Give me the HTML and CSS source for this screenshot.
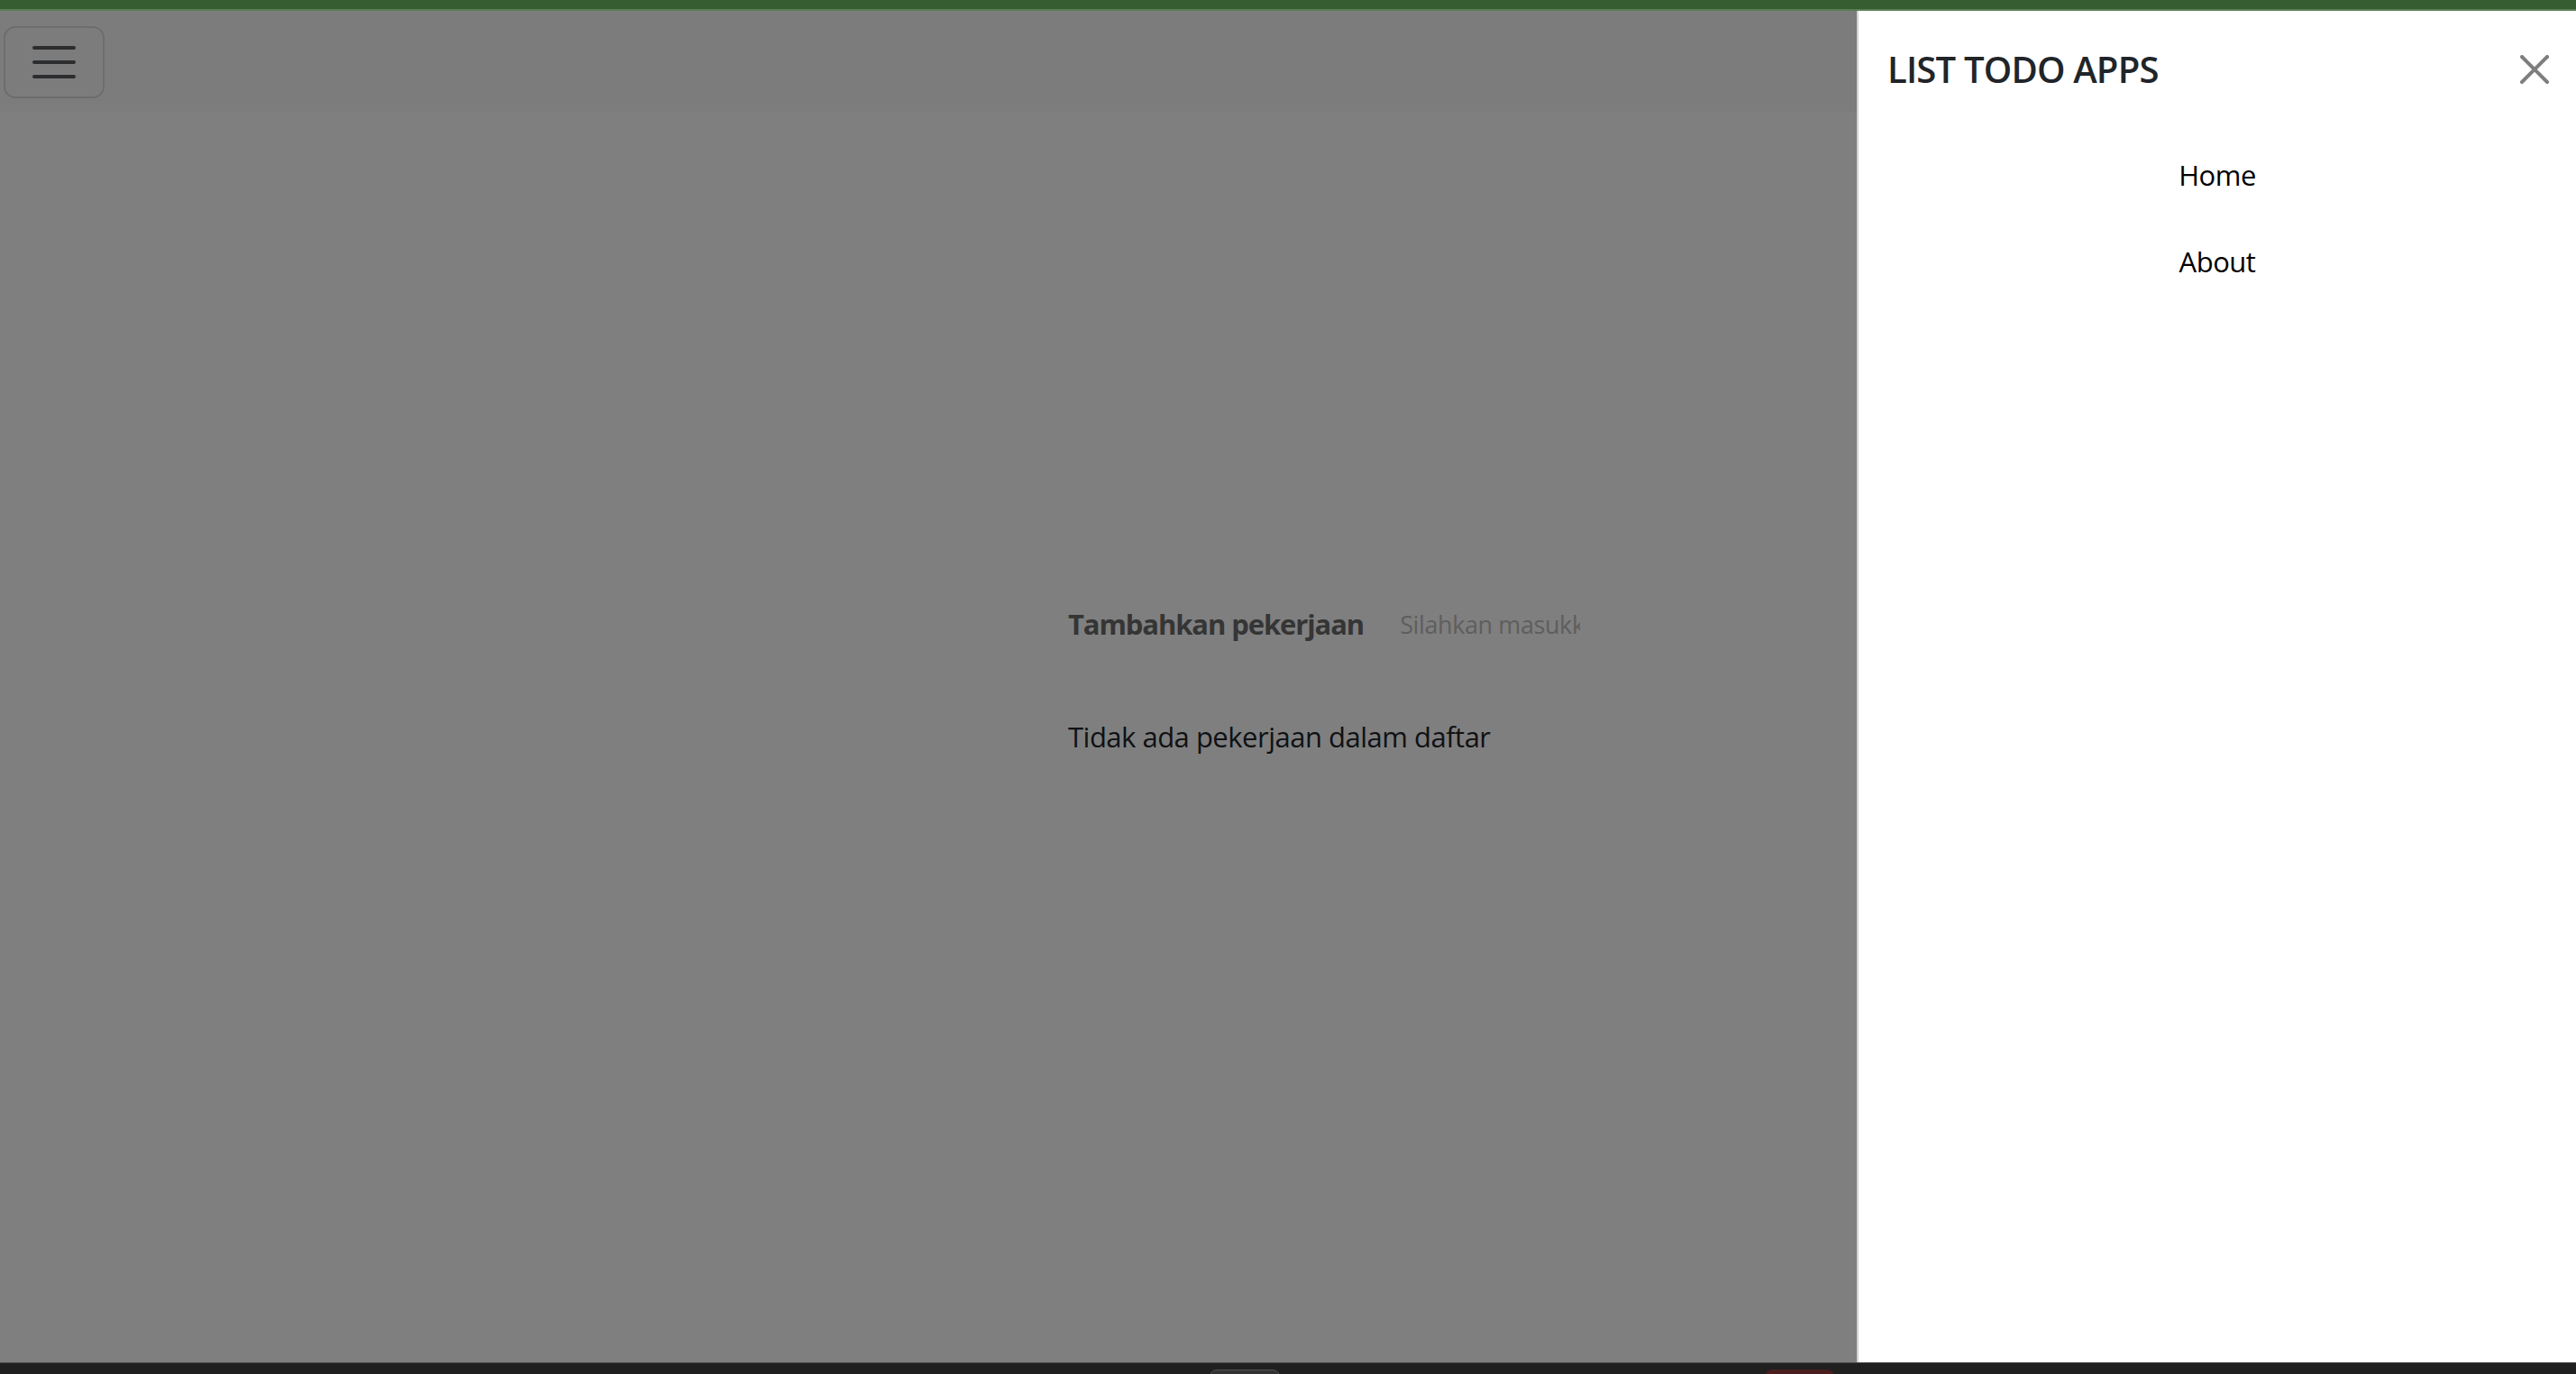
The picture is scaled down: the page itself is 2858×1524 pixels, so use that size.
FILE: index.html
```html
<!DOCTYPE html>
<html lang="id">
<head>
<meta charset="utf-8">
<title>List Todo Apps</title>
<link rel="stylesheet" href="styles.css">
</head>
<body>
  <div class="os-top"></div>
  <div class="viewport">
    <nav class="navbar">
      <button class="toggler" type="button" aria-label="Toggle navigation">
        <svg class="toggler-icon" viewBox="0 0 30 30" width="60" height="60"><path d="M4 7h22M4 15h22M4 23h22" stroke="rgba(33,37,41,0.75)" stroke-width="2" stroke-linecap="round" stroke-miterlimit="10" fill="none"/></svg>
      </button>
    </nav>
    <main class="content">
      <form class="add-row">
        <label class="add-label" for="task">Tambahkan pekerjaan</label>
        <input class="add-input" id="task" type="text" placeholder="Silahkan masukkan pekerjaan">
      </form>
      <p class="empty">Tidak ada pekerjaan dalam daftar</p>
    </main>
    <div class="backdrop"></div>
    <aside class="offcanvas">
      <div class="oc-header">
        <h5 class="oc-title">LIST TODO APPS</h5>
        <button class="btn-close" type="button" aria-label="Close">
          <svg viewBox="0 0 16 16" width="32" height="32"><path d="M.293.293a1 1 0 0 1 1.414 0L8 6.586 14.293.293a1 1 0 1 1 1.414 1.414L9.414 8l6.293 6.293a1 1 0 0 1-1.414 1.414L8 9.414l-6.293 6.293a1 1 0 0 1-1.414-1.414L6.586 8 .293 1.707a1 1 0 0 1 0-1.414z" fill="#000"/></svg>
        </button>
      </div>
      <div class="oc-body">
        <ul class="nav">
          <li><a class="nav-link" href="#">Home</a></li>
          <li><a class="nav-link" href="#">About</a></li>
        </ul>
      </div>
    </aside>
  </div>
  <div class="taskbar">
    <span class="tb-icon"></span>
    <span class="tb-icon tb-red"></span>
  </div>
</body>
</html>
```
FILE: styles.css
```css
* { box-sizing: border-box; }
html, body { height: 100%; }
body {
  margin: 0;
  height: 100vh;
  display: flex;
  flex-direction: column;
  overflow: hidden;
  font-family: "Open Sans", "Noto Sans", sans-serif;
  background: #202020;
}
.os-top {
  flex: none;
  height: 12px;
  background: #365d32;
  border-bottom: 2px solid #5a7c55;
}
.viewport {
  flex: 1;
  position: relative;
  overflow: hidden;
  background: #fff;
}
.navbar {
  background: #f8f9fa;
  padding: 17px 4px 15px;
  display: flex;
  align-items: center;
}
.toggler {
  display: flex;
  padding: 8px 24px;
  border: 2px solid rgba(33,37,41,0.15);
  border-radius: 13px;
  background: transparent;
}
.toggler-icon { display: block; }

.content {
  width: 488px;
  margin: 0 auto;
  padding-top: 544px;
}
.add-row {
  display: flex;
  align-items: center;
  margin: 0;
}
.add-label {
  flex: none;
  font-weight: 700;
  font-size: 31px;
  line-height: 48px;
  letter-spacing: -1.1px;
  color: #6a6a6a;
}
.add-input {
  flex: none;
  margin-left: 40px;
  width: 200px;
  height: 48px;
  padding: 0;
  border: 0;
  background: transparent;
  outline: none;
  font-family: "Open Sans", "Noto Sans", sans-serif;
  font-size: 27px;
  letter-spacing: -0.4px;
  color: #212529;
}
.add-input::placeholder { color: #bdbdbd; opacity: 1; }
.empty {
  margin: 77px 0 0;
  font-size: 31px;
  line-height: 48px;
  letter-spacing: -0.5px;
  color: #212529;
  white-space: nowrap;
}

.backdrop {
  position: absolute;
  inset: 0;
  background: #000;
  opacity: 0.5;
}
.offcanvas {
  position: absolute;
  top: 0;
  right: 0;
  bottom: 0;
  width: 798px;
  background: #fff;
  border-left: 2px solid rgba(0,0,0,0.175);
  display: flex;
  flex-direction: column;
}
.oc-header {
  display: flex;
  align-items: center;
  padding: 41px 30px 31px 32px;
}
.oc-title {
  margin: 0;
  font-size: 40px;
  line-height: 48px;
  font-weight: 600;
  letter-spacing: -0.8px;
  color: #212529;
}
.btn-close {
  margin-left: auto;
  width: 32px;
  height: 32px;
  padding: 0;
  border: 0;
  background: transparent;
  opacity: 0.5;
  display: flex;
}
.btn-close svg { display: block; }
.oc-body { padding: 14px 0 0; }
.nav {
  list-style: none;
  margin: 0;
  padding: 0;
  text-align: center;
}
.nav-link {
  display: block;
  padding: 24px 0;
  font-size: 31px;
  line-height: 48px;
  letter-spacing: -0.5px;
  color: #000;
  text-decoration: none;
}

.taskbar {
  flex: none;
  height: 13px;
  background: #202020;
  border-top: 1px solid #4b4b4b;
  display: flex;
  align-items: flex-start;
  padding-top: 7px;
  overflow: hidden;
}
.tb-icon {
  flex: none;
  width: 78px;
  height: 14px;
  margin-left: 1342px;
  border-radius: 8px 8px 0 0;
  background: #333;
  border: 1px solid #505050;
}
.tb-red {
  margin-left: 538px;
  width: 77px;
  background: #4a1f1f;
  border-color: #4a1f1f;
}
```
